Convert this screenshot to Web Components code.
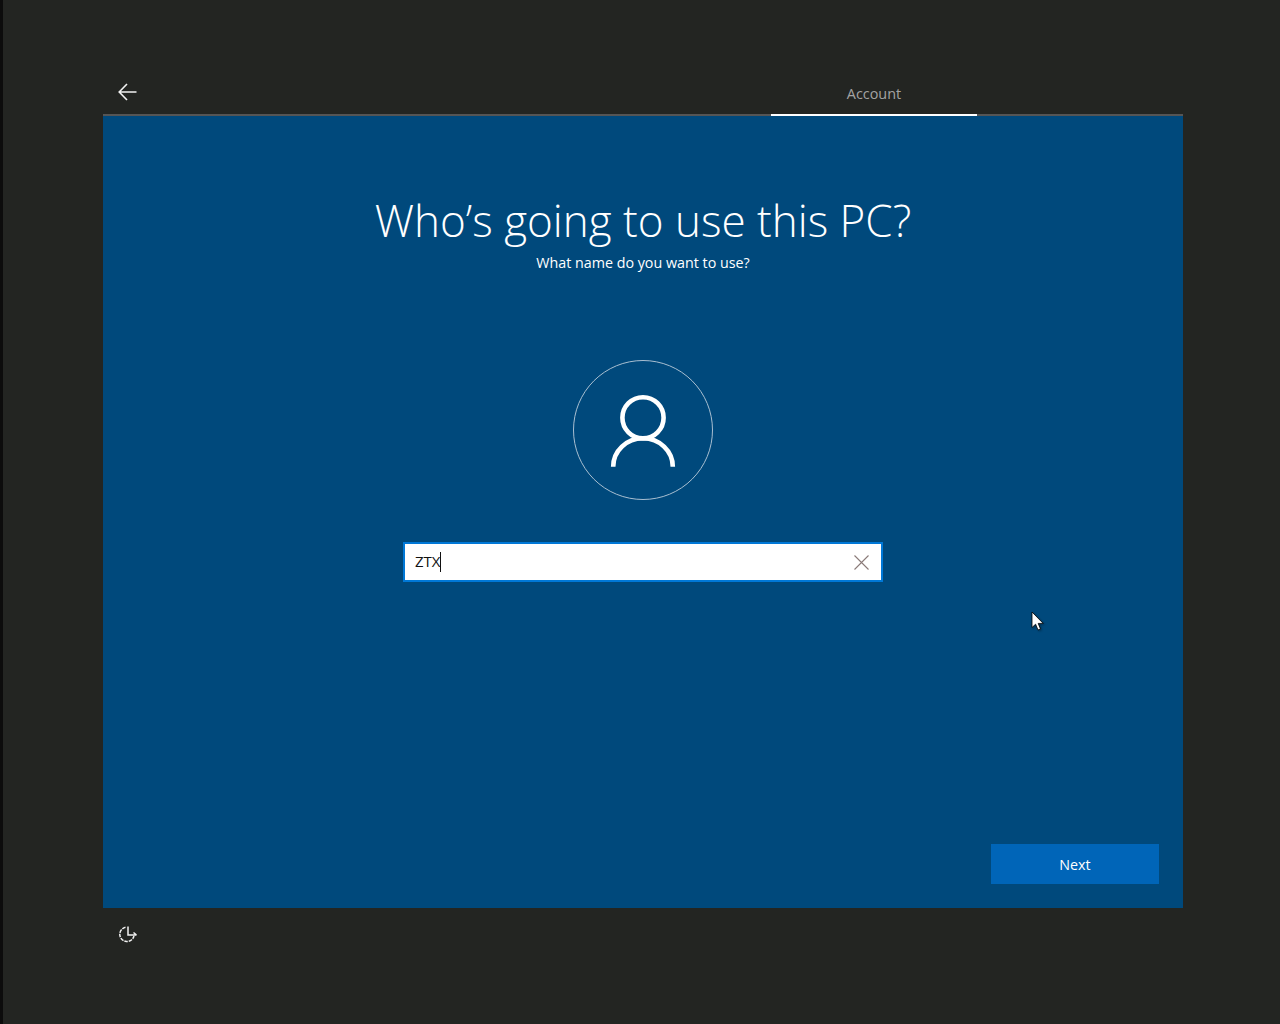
<!DOCTYPE html>
<html lang="en">
<head>
<meta charset="utf-8">
<title>Account</title>
<style>
  html, body { margin: 0; height: 100%; background: #232522; }
  body { font-family: "Open Sans", "Liberation Sans", sans-serif; color: #fff; overflow: hidden; }
</style>
</head>
<body>
<oobe-page>
  <oobe-header slot="header" tab="Account"></oobe-header>
  <oobe-avatar></oobe-avatar>
  <oobe-input value="ZTX"></oobe-input>
  <oobe-button slot="action">Next</oobe-button>
  <oobe-footer slot="footer"></oobe-footer>
</oobe-page>
<oobe-cursor></oobe-cursor>

<script>
(function () {
  'use strict';

  /* ── frame: dark page, blue panel, centred column, action row ── */
  class OobePage extends HTMLElement {
    constructor() {
      super();
      this.attachShadow({ mode: 'open' }).innerHTML = `
        <style>
          :host { display: flex; flex-direction: column; height: 1024px; box-sizing: border-box;
                  border-left: 3px solid #0c0c0c; padding: 0 97px 0 100px; }
          .panel { height: 792px; background: #00497c; box-sizing: border-box;
                   display: flex; flex-direction: column; align-items: center; padding-top: 76px; }
          h1 { margin: 0; font: 300 44px/56px "Open Sans", sans-serif; color: #fff; white-space: nowrap; }
          p { margin: 5px 0 0; font: 400 14.3px/20px "Open Sans", sans-serif; color: #fff; }
          .avatar { margin-top: 87px; }
          .actions { margin-top: auto; align-self: stretch; display: flex; justify-content: flex-end;
                     padding: 0 24px 24px 0; }
        </style>
        <slot name="header"></slot>
        <div class="panel">
          <h1>Who’s going to use this PC?</h1>
          <p>What name do you want to use?</p>
          <div class="avatar"><slot></slot></div>
          <div class="actions"><slot name="action"></slot></div>
        </div>
        <slot name="footer"></slot>`;
    }
  }

  class OobeHeader extends HTMLElement {
    constructor() {
      super();
      this.attachShadow({ mode: 'open' }).innerHTML = `
        <style>
          :host { display: flex; justify-content: space-between; height: 116px; box-sizing: border-box;
                  border-bottom: 2px solid #555; }
          .back { align-self: flex-start; margin: 83px 0 0 15px; width: 19px; height: 18px; display: block; }
          .tab { margin: 0 206px -2px 0; width: 206px; box-sizing: border-box; height: 116px;
                 border-bottom: 2px solid #fff; text-align: center; padding-top: 84px;
                 font: 400 14.4px/20px "Open Sans", sans-serif; color: #a3a3a3; }
        </style>
        <svg class="back" viewBox="0 0 19 18" fill="none" stroke="#f2f2f2" stroke-width="1.6">
          <path d="M9 1 1.200 9 9 17M1.200 9H18.500"/>
        </svg>
        <div class="tab"></div>`;
      this.shadowRoot.querySelector('.tab').textContent = this.getAttribute('tab');
    }
  }

  class OobeAvatar extends HTMLElement {
    constructor() {
      super();
      this.attachShadow({ mode: 'open' }).innerHTML = `
        <style>
          :host { display: block; width: 140px; height: 140px; margin: 0 auto 42px; }
          svg { display: block; }
        </style>
        <svg width="140" height="140" viewBox="0 0 140 140" fill="none">
          <circle cx="70" cy="70" r="69.500" stroke="#a9bfd1" stroke-width="1"/>
          <circle cx="70" cy="57.800" r="20.600" stroke="#fff" stroke-width="4.600"/>
          <path d="M40.200 106.700A29.800 28.400 0 0 1 99.800 106.700" stroke="#fff" stroke-width="4.600"/>
        </svg>`;
    }
  }

  class OobeInput extends HTMLElement {
    constructor() {
      super();
      this.attachShadow({ mode: 'open' }).innerHTML = `
        <style>
          :host { display: flex; align-items: center; width: 480px; height: 40px; box-sizing: border-box;
                  border: 2px solid #0078d7; background: #fff; padding: 0 12px 0 10px;
                  font: 400 15px/20px "Open Sans", sans-serif; color: #111; margin: 0 auto; }
          .value { margin-bottom: 3px; }
          .caret { width: 1px; height: 20px; background: #111; margin-left: -1px; }
          svg { margin-left: auto; display: block; }
        </style>
        <span class="value"></span><span class="caret"></span>
        <svg width="15" height="15" viewBox="0 0 15 15" stroke="#8a7a78" stroke-width="1.100" fill="none">
          <path d="M.5.5l14 14M14.500.5l-14 14"/>
        </svg>`;
      this.shadowRoot.querySelector('.value').textContent = this.getAttribute('value');
    }
  }

  class OobeButton extends HTMLElement {
    constructor() {
      super();
      this.attachShadow({ mode: 'open' }).innerHTML = `
        <style>
          :host { display: flex; align-items: center; justify-content: center; width: 168px; height: 40px;
                  box-sizing: border-box; padding-top: 2px;
                  background: #0065b8; color: #fff; font: 400 14.3px/20px "Open Sans", sans-serif; }
        </style>
        <slot></slot>`;
    }
  }

  class OobeFooter extends HTMLElement {
    constructor() {
      super();
      this.attachShadow({ mode: 'open' }).innerHTML = `
        <style>
          :host { display: block; padding: 17px 0 0 15px; }
          svg { display: block; }
        </style>
        <svg width="20" height="20" viewBox="0 0 20 20" fill="none" stroke="#f2f2f2" stroke-width="1.500">
          <path d="M7.500 2.300A7.200 7.200 0 1 0 16 11" stroke-dasharray="3.500 1"/>
          <path d="M10 1.500V10H18.500M15.500 7.500l3 2.500"/>
        </svg>`;
    }
  }

  /* pointer lies over the panel, so it is the one absolute item */
  class OobeCursor extends HTMLElement {
    constructor() {
      super();
      this.attachShadow({ mode: 'open' }).innerHTML = `
        <style>
          :host { position: absolute; left: 1031px; top: 611px; width: 14px; height: 21px; display: block; }
          svg { display: block; filter: drop-shadow(1px 1px 1px rgba(0,0,0,.35)); }
        </style>
        <svg width="14" height="21" viewBox="0 0 14 21">
          <path d="M1 1V16.500l3.600-3.300L7 19l2.500-1L7.200 12.400h5z" fill="#fff" stroke="#000" stroke-width=".8"/>
        </svg>`;
    }
  }

  customElements.define('oobe-page', OobePage);
  customElements.define('oobe-header', OobeHeader);
  customElements.define('oobe-avatar', OobeAvatar);
  customElements.define('oobe-input', OobeInput);
  customElements.define('oobe-button', OobeButton);
  customElements.define('oobe-footer', OobeFooter);
  customElements.define('oobe-cursor', OobeCursor);
})();
</script>
</body>
</html>
